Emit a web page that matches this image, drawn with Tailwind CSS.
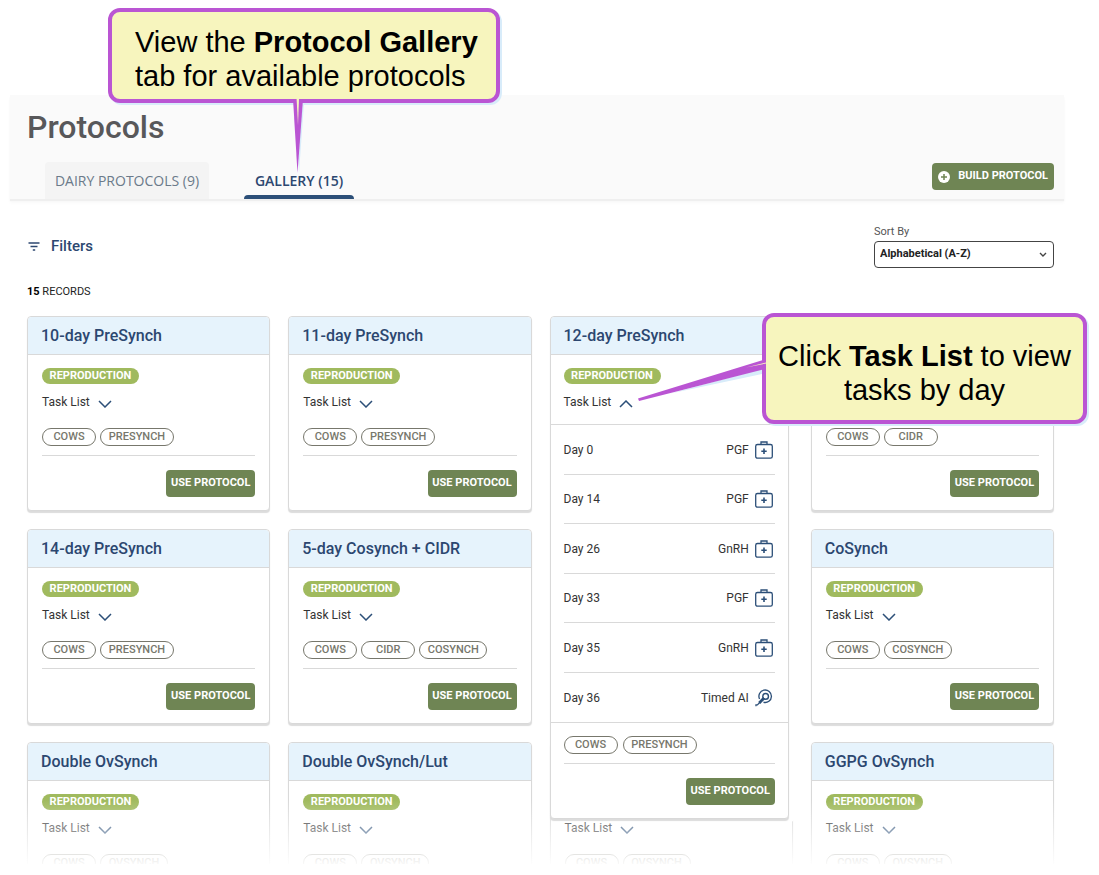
<!DOCTYPE html>
<html lang="en">

<head>
    <meta charset="UTF-8">
    <meta name="viewport" content="width=device-width, initial-scale=1.0">
    <title>Protocols - Gallery</title>
    <script src="https://cdn.jsdelivr.net/npm/@tailwindcss/browser@4"></script>
</head>

<body class="relative h-screen min-w-[1000px] overflow-hidden bg-white font-['Roboto',sans-serif] text-[#333]">
    <!-- Icons -->
    <svg class="hidden" aria-hidden="true">
        <symbol id="icon-down" viewBox="0 0 14 8">
            <path d="M1 1l6 6 6-6" fill="none" stroke="currentColor" stroke-width="1.5" />
        </symbol>
        <symbol id="icon-select" viewBox="0 0 8 5">
            <path d="M1 1l3 3 3-3" fill="none" stroke="currentColor" stroke-width="1.4" />
        </symbol>
        <symbol id="icon-up" viewBox="0 0 14 8">
            <path d="M1 7l6-6 6 6" fill="none" stroke="currentColor" stroke-width="1.5" />
        </symbol>
        <symbol id="icon-kit" viewBox="0 0 18 18">
            <path d="M6 3.500V1h6v2.500" fill="none" stroke="currentColor" stroke-width="1.300" />
            <rect x="0.700" y="3.500" width="16.600" height="13.700" rx="1.800" fill="none" stroke="currentColor" stroke-width="1.300" />
            <path d="M9 7.500v5.400M6.300 10.200h5.400" fill="none" stroke="currentColor" stroke-width="1.600" />
        </symbol>
        <symbol id="icon-timed" viewBox="0 0 18 19">
            <path d="M4.300 10.500A6.600 6.600 0 1 1 8.500 14" fill="none" stroke="currentColor" stroke-width="1.400" />
            <circle cx="10.700" cy="7.800" r="3" fill="none" stroke="currentColor" stroke-width="1.500" />
            <path d="M9 9.500L4 14.800" fill="none" stroke="currentColor" stroke-width="3" />
            <path d="M4.500 14.300L2 16.800H0.500v1.500" fill="none" stroke="currentColor" stroke-width="1.300" />
        </symbol>
    </svg>

    <div class="flex h-full flex-col pt-[95px] pr-[35px] pb-[11px] pl-[10px]">
        <!-- Header -->
        <header class="z-10 flex h-[104px] shrink-0 items-end justify-between bg-[#fafafa] pr-[10px] shadow-[0_2px_1px_#efefef,0_4px_3px_#f9f9f9]">
            <div>
                <h1 class="mb-[17px] ml-[17px] text-[32px] leading-[36px] font-medium text-[#58585a]">Protocols</h1>
                <nav class="ml-[35px] flex gap-[35px] font-['Open_Sans',sans-serif] text-[14px]">
                    <a href="#" class="flex h-[37px] w-[164px] items-center justify-center rounded-t bg-[#f4f4f4] whitespace-nowrap text-[#6b7a8a]">DAIRY PROTOCOLS (9)</a>
                    <a href="#" class="flex h-[37px] w-[110px] flex-col items-center justify-between font-semibold text-[#2c4770]">
                        <span class="pt-2">GALLERY (15)</span>
                        <span class="h-1 w-full rounded-t bg-[#2c4f78]"></span>
                    </a>
                </nav>
            </div>
            <button type="button" class="mb-[9px] flex h-[27px] w-[122px] items-center justify-between rounded bg-[#6f8554] px-[6px] text-[11px] font-bold text-white">
                <svg class="size-3" viewBox="0 0 12 12">
                    <circle cx="6" cy="6" r="6" fill="#fff" />
                    <path d="M6 3v6M3 6h6" stroke="#6f8554" stroke-width="1.500" />
                </svg>
                BUILD PROTOCOL
            </button>
        </header>

        <main class="relative min-h-0 flex-1 overflow-hidden pr-[10px] pl-[17px]">
            <div class="flex items-start justify-between pt-[25px]">
                <button type="button" class="mt-[11px] flex items-center gap-[11px] text-[15px] leading-[22px] font-medium text-[#2c4770]">
                    <svg class="ml-px h-[9px] w-[12px]" viewBox="0 0 12 9" fill="none" stroke="currentColor" stroke-width="1.300">
                        <path d="M0.500 1h11M2.500 4.500h7M4.800 8h2.400" />
                    </svg>
                    Filters
                </button>
                <div class="w-[180px]">
                    <label for="sort" class="block text-[11px] leading-4 text-[#555]">Sort By</label>
                    <div class="relative mt-px h-[27px]">
                        <select id="sort" class="block h-[27px] w-full appearance-none rounded border border-[#444] bg-white pl-[5px] text-[11px] font-bold text-[#222]">
                            <option>Alphabetical (A-Z)</option>
                        </select>
                        <svg class="pointer-events-none absolute top-[11px] right-[7px] h-[5px] w-2 text-[#444]"><use href="#icon-select" /></svg>
                    </div>
                </div>
            </div>

            <p class="mt-4 mb-4 text-[11px] leading-4 text-[#222]"><b class="text-black">15</b> RECORDS</p>

            <div id="gallery" class="grid grid-cols-4 gap-[18px]">
                <!-- Expanded card, opens over the cards below it -->
                <article class="z-10 col-start-3 row-span-3 row-start-1 mr-1 self-start rounded border border-[#d9d9d9] bg-white shadow-[0_2px_1px_#dcdcdc,5px_3px_0_#fff]">
                    <h2 class="h-[38px] rounded-t border-b border-[#d9d9d9] bg-[#e6f3fc] pl-[13px] text-[16px] leading-[37px] font-medium text-[#2c4770]">12-day PreSynch</h2>
                    <div class="h-[70px] border-b border-[#d9d9d9] px-[13px] pt-[13px]">
                        <span class="block h-4 w-[97px] rounded-full bg-[#a0ba5e] text-center text-[11px] leading-4 font-bold text-white">REPRODUCTION</span>
                        <button type="button" class="mt-2 flex items-center gap-2 text-[12px] leading-5">Task List
                            <svg class="mt-1 h-2 w-[14px] text-[#2c4f78]"><use href="#icon-up" /></svg>
                        </button>
                    </div>
                    <ul id="tasks" class="grid h-[298px] grid-rows-6 border-b border-[#d9d9d9] px-[13px] text-[12px]"></ul>
                    <div class="px-[13px] pt-[13px] pb-[13px]">
                        <div class="flex gap-[5px] border-b border-[#d9d9d9] pb-[9px] text-[11px] leading-4 font-medium text-[#77776c]">
                            <span class="w-[54px] rounded-full border border-[#77776c] text-center">COWS</span>
                            <span class="w-[74px] rounded-full border border-[#77776c] text-center">PRESYNCH</span>
                        </div>
                        <button type="button" class="mt-[14px] ml-auto block h-[27px] w-[89px] rounded bg-[#6f8554] text-[11px] font-bold text-white">USE PROTOCOL</button>
                    </div>
                </article>
            </div>

            <div class="pointer-events-none absolute inset-x-0 bottom-0 h-16 bg-linear-to-b from-white/0 to-white/95"></div>
        </main>
    </div>

    <!-- Callouts -->
    <aside class="absolute top-[8px] left-[108px] z-20 flex h-[95px] w-[392px] items-center rounded-xl border-4 border-[#ba55d3] bg-[#f7f5be] pt-[6px] pl-[23px] font-['Liberation_Sans',sans-serif] text-[29px] leading-[34px] text-black shadow-[2px_2px_0_#d8ecfa]">
        <p class="whitespace-nowrap">View the <b>Protocol Gallery</b><br>tab for available protocols</p>
        <svg class="absolute top-[87px] left-[181px] h-[77px] w-3" viewBox="0 0 12 77">
            <path d="M3 4h8L6 74z" fill="#d8ecfa" />
            <path d="M0 0h10L4.500 74z" fill="#ba55d3" />
            <path d="M3.600 0h2.400L5 26z" fill="#f7f5be" />
        </svg>
    </aside>

    <aside class="absolute top-[313px] left-[762px] z-20 flex h-[111px] w-[325px] items-center justify-center rounded-xl border-4 border-[#ba55d3] bg-[#f7f5be] pt-2 text-center font-['Liberation_Sans',sans-serif] text-[29px] leading-[34px] text-black shadow-[2px_2px_0_#d8ecfa]">
        <p class="whitespace-nowrap">Click <b>Task List</b> to view<br>tasks by day</p>
        <svg class="absolute top-[37px] -left-[128px] h-[48px] w-[128px]" viewBox="0 0 128 48">
            <path d="M30 40L124 15v5z" fill="#d8ecfa" />
            <path d="M0 44.500L125 6v9.500L1 47z" fill="#ba55d3" />
            <path d="M108 13.500L128 8.500v1z" fill="#f7f5be" />
        </svg>
    </aside>

    <script>
        const protocols = [
            { name: '10-day PreSynch', tags: ['COWS', 'PRESYNCH'], place: 'col-start-1 row-start-1' },
            { name: '11-day PreSynch', tags: ['COWS', 'PRESYNCH'], place: 'col-start-2 row-start-1' },
            { name: '14-day CIDR', tags: ['COWS', 'CIDR'], place: 'col-start-4 row-start-1' },
            { name: '14-day PreSynch', tags: ['COWS', 'PRESYNCH'], place: 'col-start-1 row-start-2' },
            { name: '5-day Cosynch + CIDR', tags: ['COWS', 'CIDR', 'COSYNCH'], place: 'col-start-2 row-start-2' },
            { name: 'CoSynch', tags: ['COWS', 'COSYNCH'], place: 'col-start-4 row-start-2' },
            { name: 'Double OvSynch', tags: ['COWS', 'OVSYNCH'], place: 'col-start-1 row-start-3' },
            { name: 'Double OvSynch/Lut', tags: ['COWS', 'OVSYNCH'], place: 'col-start-2 row-start-3' },
            { name: 'G6G OvSynch', tags: ['COWS', 'OVSYNCH'], place: 'col-start-3 row-start-3' },
            { name: 'GGPG OvSynch', tags: ['COWS', 'OVSYNCH'], place: 'col-start-4 row-start-3' }
        ];

        const tagWidths = {
            COWS: 'w-[54px]',
            CIDR: 'w-[54px]',
            PRESYNCH: 'w-[74px]',
            COSYNCH: 'w-[68px]',
            OVSYNCH: 'w-[68px]'
        };

        const tasks = [
            ['Day 0', 'PGF', 'kit'],
            ['Day 14', 'PGF', 'kit'],
            ['Day 26', 'GnRH', 'kit'],
            ['Day 33', 'PGF', 'kit'],
            ['Day 35', 'GnRH', 'kit'],
            ['Day 36', 'Timed AI', 'timed']
        ];

        const gallery = document.getElementById('gallery');

        protocols.forEach(p => {
            const tags = p.tags.map(t =>
                `<span class="${tagWidths[t]} rounded-full border border-[#77776c] text-center">${t}</span>`).join('');

            gallery.insertAdjacentHTML('beforeend', `
                <article class="${p.place} rounded border border-[#d9d9d9] bg-white shadow-[0_2px_1px_#dcdcdc]">
                    <h2 class="h-[38px] rounded-t border-b border-[#d9d9d9] bg-[#e6f3fc] pl-[13px] text-[16px] leading-[37px] font-medium text-[#2c4770]">${p.name}</h2>
                    <div class="px-[14px] py-[13px]">
                        <span class="block h-4 w-[97px] rounded-full bg-[#a0ba5e] text-center text-[11px] leading-4 font-bold text-white">REPRODUCTION</span>
                        <button type="button" class="mt-2 flex items-center gap-2 text-[12px] leading-5">Task List
                            <svg class="mt-1 h-2 w-[14px] text-[#2c4f78]"><use href="#icon-down" /></svg>
                        </button>
                        <div class="mt-4 flex gap-1 border-b border-[#d9d9d9] pb-[9px] text-[11px] leading-4 font-medium text-[#77776c]">${tags}</div>
                        <button type="button" class="mt-[14px] ml-auto block h-[27px] w-[89px] rounded bg-[#6f8554] text-[11px] font-bold text-white">USE PROTOCOL</button>
                    </div>
                </article>`);
        });

        document.getElementById('tasks').innerHTML = tasks.map(([day, task, icon]) => `
            <li class="flex items-center border-b border-[#d9d9d9] pt-px last:border-b-0">
                <span>${day}</span>
                <span class="mr-[6px] ml-auto">${task}</span>
                <svg class="mr-[2px] h-[18px] w-[18px] text-[#2c4f78]"><use href="#icon-${icon}" /></svg>
            </li>`).join('');
    </script>
</body>

</html>
